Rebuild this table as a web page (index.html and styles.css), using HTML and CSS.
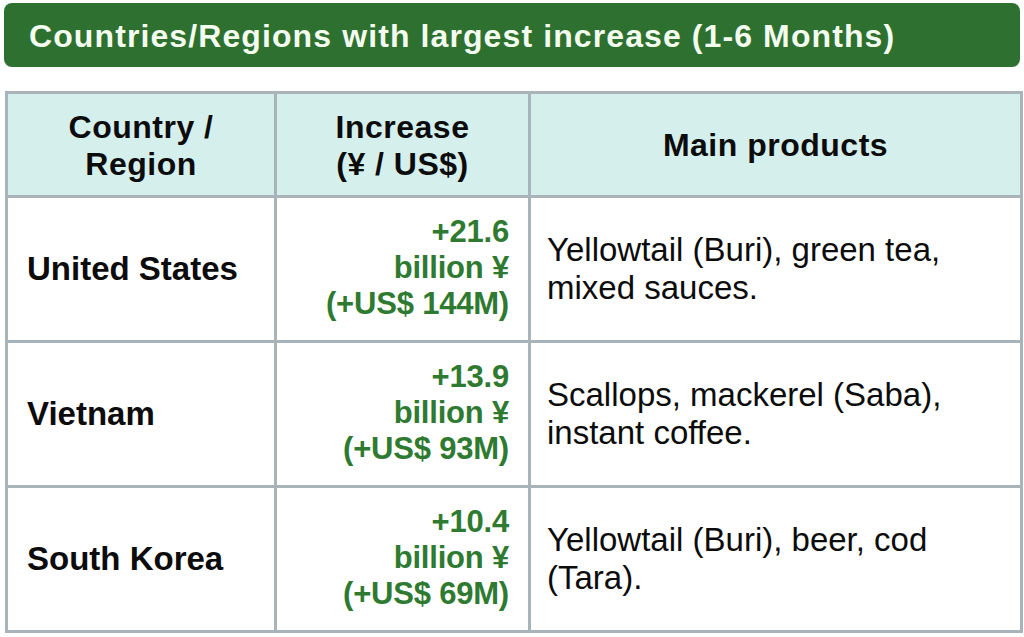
FILE: index.html
```html
<!DOCTYPE html>
<html lang="en">
<head>
<meta charset="utf-8">
<title>Countries/Regions with largest increase</title>
<link rel="stylesheet" href="styles.css">
</head>
<body>
<div class="page">
  <div class="title-bar">
    <h1 class="title">Countries/Regions with largest increase (1-6 Months)</h1>
  </div>
  <table class="data">
    <colgroup>
      <col class="c1">
      <col class="c2">
      <col class="c3">
    </colgroup>
    <thead>
      <tr>
        <th>Country /<br>Region</th>
        <th>Increase<br>(¥ / US$)</th>
        <th>Main products</th>
      </tr>
    </thead>
    <tbody>
      <tr>
        <td class="country">United States</td>
        <td class="inc">+21.6<br>billion ¥<br>(+US$ 144M)</td>
        <td class="prod">Yellowtail (Buri), green tea,<br>mixed sauces.</td>
      </tr>
      <tr>
        <td class="country">Vietnam</td>
        <td class="inc">+13.9<br>billion ¥<br>(+US$ 93M)</td>
        <td class="prod">Scallops, mackerel (Saba),<br>instant coffee.</td>
      </tr>
      <tr>
        <td class="country">South Korea</td>
        <td class="inc">+10.4<br>billion ¥<br>(+US$ 69M)</td>
        <td class="prod">Yellowtail (Buri), beer, cod<br>(Tara).</td>
      </tr>
    </tbody>
  </table>
</div>
</body>
</html>
```

FILE: styles.css
```css
html, body {
  margin: 0;
  padding: 0;
  background: #ffffff;
}

body {
  font-family: "Liberation Sans", Arial, Helvetica, sans-serif;
  color: #111111;
}

.page {
  width: 1024px;
  height: 637px;
  padding: 3px 4px 0 4px;
  box-sizing: border-box;
  overflow: hidden;
}

.title-bar {
  height: 64px;
  background: #2e7030;
  border-radius: 8px;
  display: flex;
  align-items: center;
  padding-left: 25px;
  box-sizing: border-box;
}

.title {
  margin: 0;
  font-size: 32px;
  font-weight: bold;
  letter-spacing: 1.1px;
  color: #f3fcef;
  line-height: 1;
  padding-top: 1px;
}

.data {
  margin-top: 24px;
  margin-left: 1px;
  width: 1015px;
  border-collapse: collapse;
  border: 3px solid #a9b4ba;
  table-layout: fixed;
}

.c1 { width: 269px; }
.c2 { width: 254px; }
.c3 { width: 492px; }

.data th,
.data td {
  border: 3px solid #a9b4ba;
  padding: 0;
  vertical-align: middle;
}

.data thead tr {
  height: 104px;
}

.data th {
  background: #d5efec;
  font-size: 32px;
  font-weight: bold;
  letter-spacing: 0.5px;
  line-height: 37px;
  text-align: center;
  color: #0c0c0c;
  padding-top: 2px;
}

.data tbody tr {
  height: 145px;
}

.data td {
  background: #ffffff;
}

.country {
  font-size: 33px;
  font-weight: bold;
  padding-left: 19px !important;
  color: #0c0c0c;
}

.inc {
  text-align: right;
  font-size: 31px;
  font-weight: bold;
  letter-spacing: -0.2px;
  line-height: 36px;
  color: #2e7a31;
  padding-right: 19px !important;
  padding-bottom: 2px !important;
}

.prod {
  font-size: 33px;
  line-height: 38px;
  padding-left: 16px !important;
  color: #0c0c0c;
  white-space: nowrap;
}
```
